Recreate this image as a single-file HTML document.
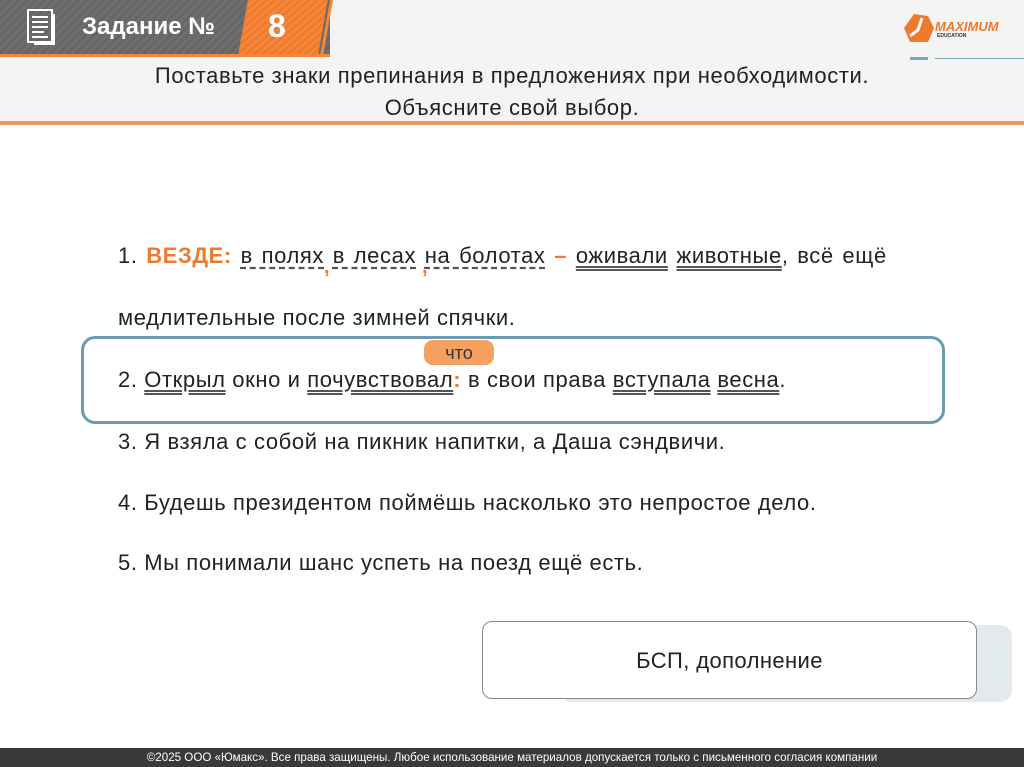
<!DOCTYPE html>
<html><head><meta charset="utf-8"><style>
body{margin:0;width:1024px;height:767px;position:relative;overflow:hidden;background:#fff;font-family:"Liberation Sans",sans-serif;color:#222}
.hdr{position:absolute;left:0;top:0;width:1024px;height:122px;background:#f4f4f4}
.dark{position:absolute;left:0;top:0;width:330px;height:55px;background:repeating-linear-gradient(135deg,#666 0 3px,#6e6e6e 3px 6px)}
.or{position:absolute;left:243px;top:0;width:80px;height:55px;background:repeating-linear-gradient(135deg,#f07a2c 0 3px,#f5873a 3px 6px);transform:skewX(-10deg)}
.t{position:absolute;white-space:nowrap}
.l{position:absolute;left:118px;font-size:22px;letter-spacing:.6px;white-space:nowrap}
u.d{text-decoration:underline dashed #555;text-underline-offset:4px}
u.s{text-decoration:underline double #555;text-underline-offset:3px}
</style></head><body>
<div class="hdr"></div>
<div class="dark"></div>
<div class="or"></div>
<div style="position:absolute;left:0;top:54px;width:330px;height:3px;background:#f5873a"></div>
<div style="position:absolute;left:325px;top:0;width:3px;height:56px;background:#f5873a;transform:skewX(-10deg)"></div>
<svg class="t" style="left:26px;top:8px" width="36" height="40" viewBox="0 0 36 40"><rect x="2" y="2" width="24" height="32" fill="none" stroke="#fff" stroke-width="2"/><path d="M6 9h16M6 14h16M6 19h16M6 24h12M6 29h16" stroke="#fff" stroke-width="2"/><path d="M28 6v30H8" fill="none" stroke="#fff" stroke-width="2"/></svg>
<div class="t" style="left:82px;top:13px;font-size:24px;font-weight:bold;color:#fff">Задание №</div>
<div class="t" style="left:268px;top:8px;font-size:32px;font-weight:bold;color:#fff">8</div>
<svg class="t" style="left:898px;top:6px" width="40" height="40"><path d="M6 22l10-14 14 2 6 12-6 14H12z" fill="#f07a2c"/><path d="M12 30l8-6 4-12" stroke="#fff" stroke-width="3" fill="none"/></svg>
<div class="t" style="left:935px;top:19px;font-size:13px;font-weight:bold;font-style:italic;color:#f07a2c">MAXIMUM</div>
<div class="t" style="left:937px;top:33px;font-size:5px;font-weight:bold;color:#333">EDUCATION</div>
<div style="position:absolute;left:935px;top:58px;width:89px;height:1px;background:#7aa6b8"></div>
<div style="position:absolute;left:910px;top:57px;width:18px;height:3px;background:#7aa6b8"></div>
<div class="t" style="left:0;width:1024px;text-align:center;top:60px;font-size:22px;letter-spacing:.6px;line-height:32px;color:#222">Поставьте знаки препинания в предложениях при необходимости.<br>Объясните свой выбор.</div>
<div style="position:absolute;left:0;top:121px;width:1024px;height:4px;background:#f0955a"></div>
<div class="l" style="top:243px;word-spacing:2px">1. <b style="color:#f07a2c">ВЕЗДЕ:</b> <u class="d">в полях</u> <u class="d">в лесах</u> <u class="d">на болотах</u> <b style="color:#f07a2c">–</b> <u class="s">оживали</u> <u class="s">животные</u>, всё ещё</div>
<div class="t" style="left:324px;top:256px;color:#f07a2c;font-size:20px;font-weight:bold">,</div>
<div class="t" style="left:422px;top:256px;color:#f07a2c;font-size:20px;font-weight:bold">,</div>
<div class="l" style="top:305px">медлительные после зимней спячки.</div>
<div style="position:absolute;left:81px;top:336px;width:858px;height:82px;border:3px solid #6a9bb0;border-radius:14px"></div>
<div style="position:absolute;left:424px;top:340px;width:70px;height:25px;background:#f5a060;border-radius:9px;text-align:center;font-size:18px;line-height:26px;color:#333">что</div>
<div class="l" style="top:367px">2. <u class="s">Открыл</u> окно и <u class="s">почувствовал</u><b style="color:#f07a2c">:</b> в свои права <u class="s">вступала</u> <u class="s">весна</u>.</div>
<div class="l" style="top:429px">3. Я взяла с собой на пикник напитки, а Даша сэндвичи.</div>
<div class="l" style="top:490px">4. Будешь президентом поймёшь насколько это непростое дело.</div>
<div class="l" style="top:550px">5. Мы понимали шанс успеть на поезд ещё есть.</div>
<div style="position:absolute;left:560px;top:625px;width:452px;height:77px;background:#e3eaed;border-radius:12px"></div>
<div style="position:absolute;left:482px;top:621px;width:493px;height:76px;background:#fff;border:1.5px solid #888;border-radius:10px;text-align:center;line-height:78px;font-size:22px;letter-spacing:.4px;color:#222">БСП, дополнение</div>
<div style="position:absolute;left:0;top:748px;width:1024px;height:19px;background:#3a3a3a;color:#fff;font-size:11.6px;line-height:19px;text-align:center">©2025 ООО «Юмакс». Все права защищены. Любое использование материалов допускается только с  письменного согласия компании</div>
</body></html>
